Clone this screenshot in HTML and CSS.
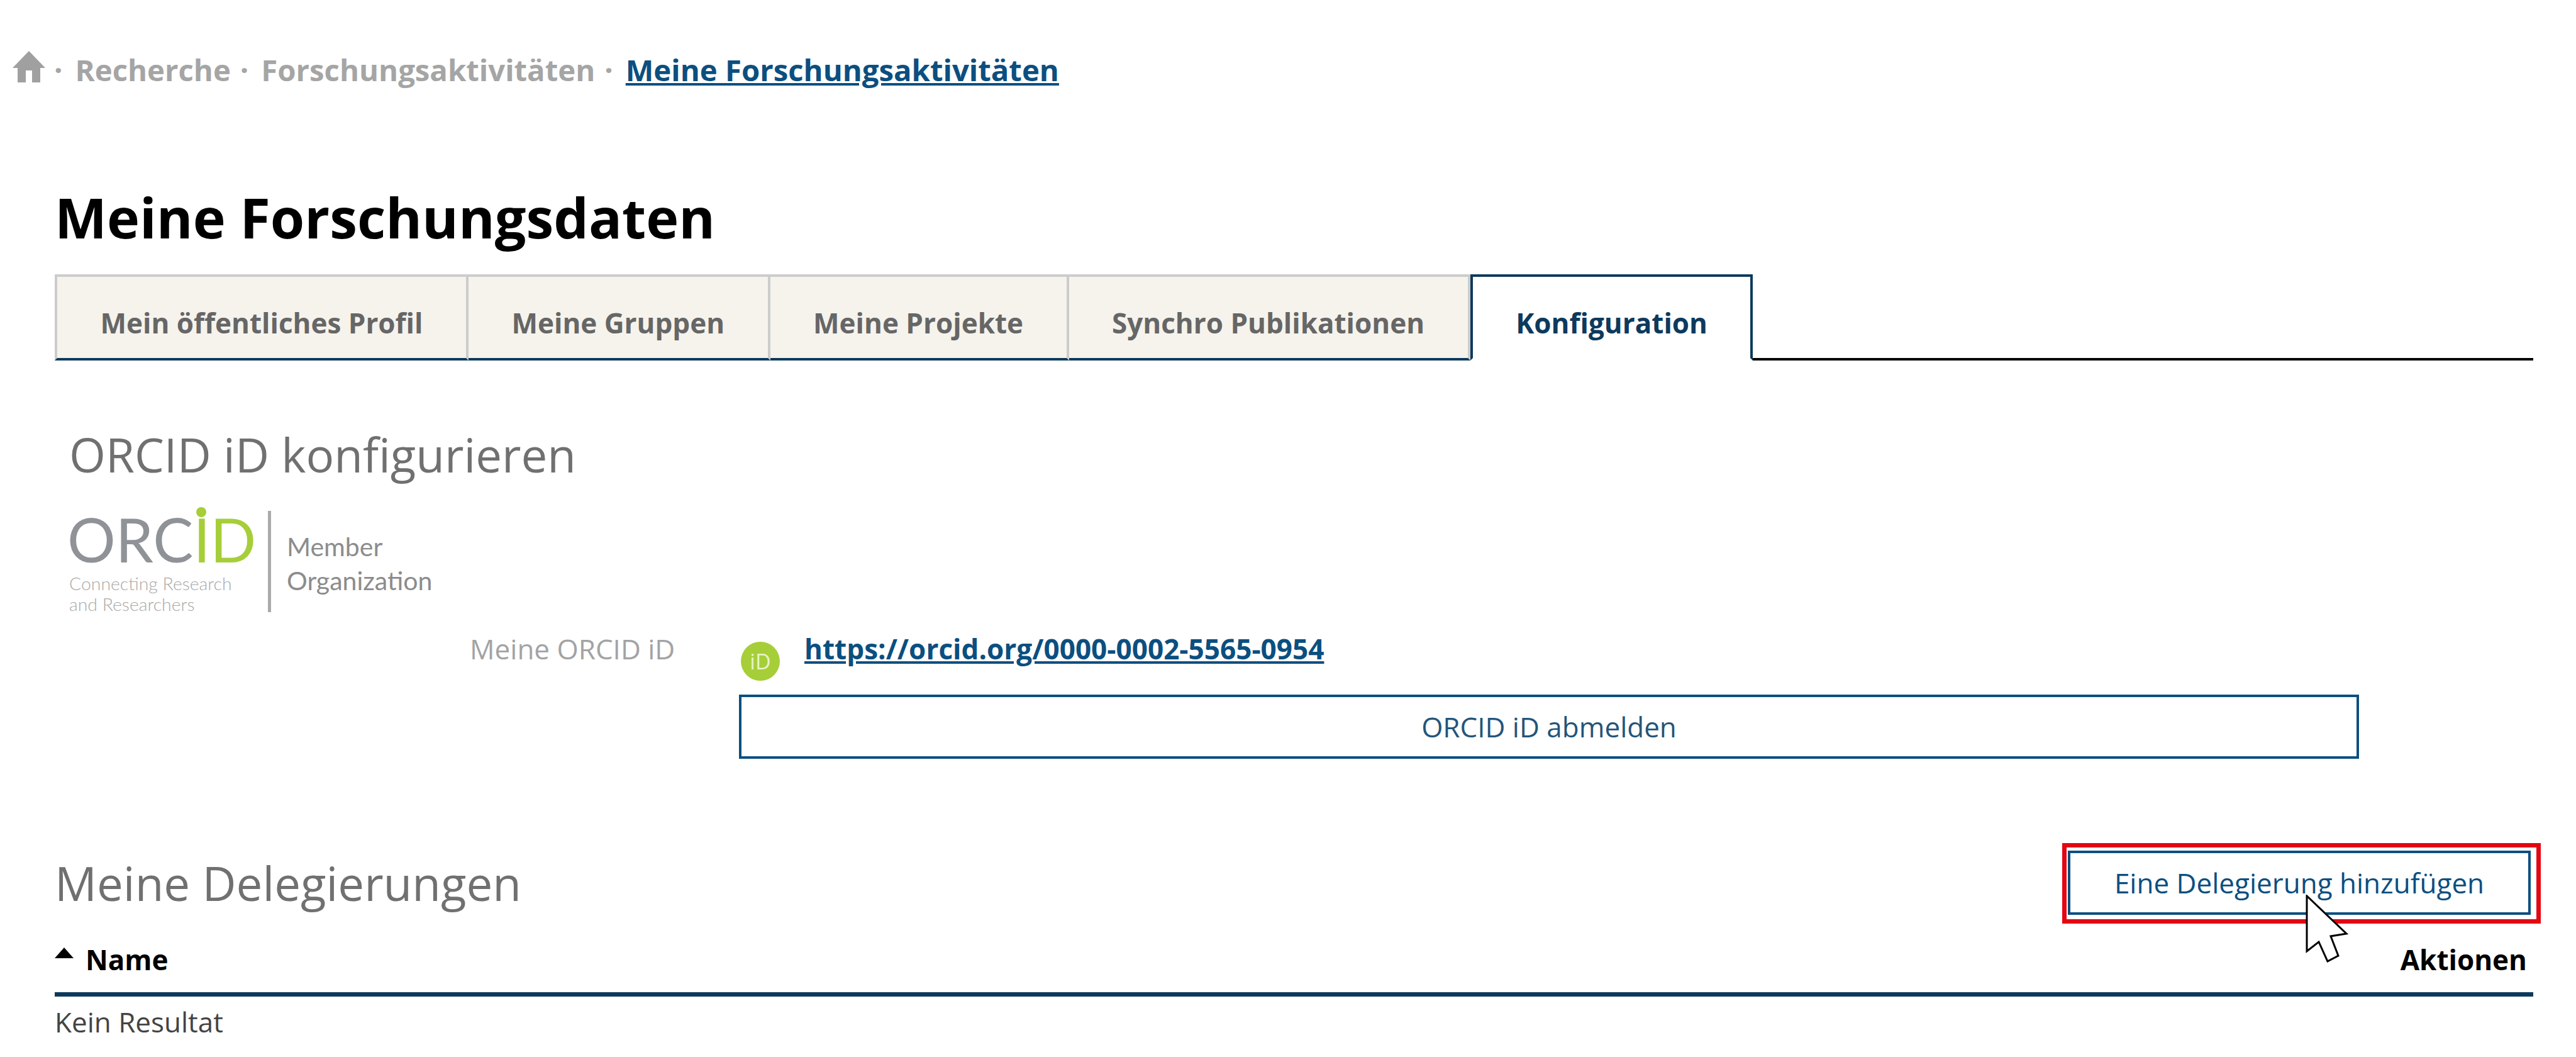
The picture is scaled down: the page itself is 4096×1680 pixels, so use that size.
FILE: index.html
```html
<!DOCTYPE html>
<html lang="de">
<head>
<meta charset="utf-8">
<title>Meine Forschungsdaten</title>
<link rel="stylesheet" href="styles.css">
</head>
<body>
<nav class="crumbs">
  <svg class="home" viewBox="0 0 52 50"><path d="M26 0 L52 27 H44 V50 H31 V31 H21 V50 H8 V27 H0 Z"/></svg>
  <span class="sep">·</span><span class="crumb">Recherche</span>
  <span class="sep">·</span><span class="crumb">Forschungsaktivitäten</span>
  <span class="sep">·</span><a class="crumb-link" href="#">Meine Forschungsaktivitäten</a>
</nav>
<main class="page">
  <h1 class="title">Meine Forschungsdaten</h1>
  <div class="tabs">
    <div class="tab">Mein öffentliches Profil</div>
    <div class="tab">Meine Gruppen</div>
    <div class="tab">Meine Projekte</div>
    <div class="tab">Synchro Publikationen</div>
    <div class="tab tab-active">Konfiguration</div>
  </div>
  <section class="orcid">
    <h2 class="subtitle">ORCID iD konfigurieren</h2>
    <svg class="logo" viewBox="0 0 600 170">
      <text class="logo-main" x="-3" y="88">ORC<tspan class="logo-green">ID</tspan></text>
      <circle class="logo-dot" cx="210" cy="8" r="8"/>
      <rect class="logo-bar" x="316" y="6" width="5" height="161"/>
      <text class="logo-tag" x="0" y="132">Connecting Research</text>
      <text class="logo-tag" x="0" y="165">and Researchers</text>
      <text class="logo-member" x="346" y="78">Member</text>
      <text class="logo-member" x="346" y="132">Organization</text>
    </svg>
    <div class="id-grid">
      <div class="id-label">Meine ORCID iD</div>
      <div class="id-value">
        <span class="badge">iD</span>
        <a class="id-link" href="#">https://orcid.org/0000-0002-5565-0954</a>
      </div>
      <div class="id-action"><button class="btn btn-wide">ORCID iD abmelden</button></div>
    </div>
  </section>
  <section class="deleg">
    <div class="deleg-head">
      <h2 class="subtitle">Meine Delegierungen</h2>
      <div class="btn-wrap">
        <button class="btn btn-add">Eine Delegierung hinzufügen</button>
        <span class="highlight"></span>
        <svg class="pointer" viewBox="0 0 68 110"><path d="M2 2 V90 L21 75 L35 106 L52 97 L40 66 L65 62 Z"/></svg>
      </div>
    </div>
    <div class="thead">
      <div class="th-name"><span class="sort"></span>Name</div>
      <div class="th-act">Aktionen</div>
    </div>
    <div class="empty">Kein Resultat</div>
  </section>
</main>
</body>
</html>
```
FILE: styles.css
```css
* { box-sizing: border-box; }
html, body { margin: 0; padding: 0; background: #fff; }
body { font-family: "Open Sans", "Liberation Sans", sans-serif; width: 4096px; height: 1680px; overflow: hidden; color: #333; }

.crumbs { display: flex; align-items: center; height: 60px; margin-top: 80px; padding-left: 20px; font-size: 47.3px; font-weight: 700; color: #a5a5a5; white-space: nowrap; }
.home { width: 52px; height: 50px; fill: #a0a0a0; margin-top: -8px; margin-right: 10px; }
.sep { margin: 0 20px 0 4px; }
.crumb { margin-right: 11px; }
.crumb-link { color: #0b4f80; text-decoration: underline; }

.page { padding: 0 68px 0 87px; }
.title { margin: 150px 0 36px; font-size: 88px; line-height: 110px; font-weight: 700; color: #000; }

.tabs { display: flex; height: 137px; border-bottom: 4px solid #000; }
.tab { display: flex; align-items: center; height: 137px; padding: 16px 68.5px 0; background: #f5f3ec; border: 4px solid #ccc; border-left-width: 0; border-bottom-color: #0d3a5c; font-size: 44px; font-weight: 700; color: #666; white-space: nowrap; }
.tab:first-child { border-left-width: 4px; }
.tab-active { background: #fff; color: #0d3a5c; border-color: #0d3a5c; border-bottom-color: #fff; border-left-width: 4px; }

.subtitle { margin: 0; font-size: 74.5px; line-height: 90px; font-weight: 400; color: #707070; }
.orcid { padding-left: 23px; padding-top: 104px; }
.logo { display: block; width: 600px; height: 170px; overflow: visible; margin-top: 39px; }
.logo-main { font-family: Lato, sans-serif; font-size: 96px; font-weight: 400; fill: #8f9296; }
.logo-green { fill: #a6ce39; }
.logo-dot { fill: #a6ce39; }
.logo-bar { fill: #aaa; }
.logo-tag { font-family: Lato, sans-serif; font-size: 28.4px; font-weight: 300; fill: #a8a8a8; }
.logo-member { font-family: Lato, sans-serif; font-size: 41px; fill: #8c8c8c; }

.id-grid { display: grid; grid-template-columns: 1065px 2576px; margin-top: 21px; }
.id-label { font-size: 44px; line-height: 60px; color: #a3a3a3; padding-left: 637px; margin-top: 4px; white-space: nowrap; }
.id-value { display: flex; align-items: flex-start; }
.badge { display: flex; align-items: center; justify-content: center; width: 62px; height: 62px; margin: 23px 39px 0 3px; border-radius: 50%; background: #a6ce39; color: #e9f3c8; font-size: 34px; font-weight: 400; }
.id-link { font-size: 44.1px; line-height: 60px; font-weight: 700; color: #0b4f80; margin-top: 4px; white-space: nowrap; }
.id-action { grid-column: 2; }
.btn { display: block; font: inherit; font-size: 44px; background: #fff; color: #0b4f80; border: 4px solid #0b4f80; padding: 0; height: 102px; }
.btn-wide { width: 2576px; margin-top: 22px; color: #24557a; }

.deleg { margin-top: 146px; }
.deleg-head { display: flex; justify-content: space-between; align-items: center; }
.btn-wrap { position: relative; margin-right: 4px; }
.btn-add { width: 736px; }
.highlight { position: absolute; left: -9px; right: -16px; top: -12px; bottom: -14px; border: 7px solid #e30613; }
.pointer { position: absolute; left: 378px; top: 70px; width: 68px; height: 110px; fill: #fff; stroke: #000; stroke-width: 3px; }

.thead { display: flex; justify-content: space-between; align-items: center; height: 130px; padding: 24px 0 6px; border-bottom: 7px solid #0d3a5c; font-size: 44px; font-weight: 700; color: #000; }
.th-name { display: flex; align-items: center; }
.sort { width: 0; height: 0; margin-right: 19px; margin-top: -20px; border-left: 15px solid transparent; border-right: 15px solid transparent; border-bottom: 17px solid #000; }
.th-act { margin-right: 10px; }
.empty { font-size: 44px; line-height: 60px; margin-top: 10px; color: #444; }
```
